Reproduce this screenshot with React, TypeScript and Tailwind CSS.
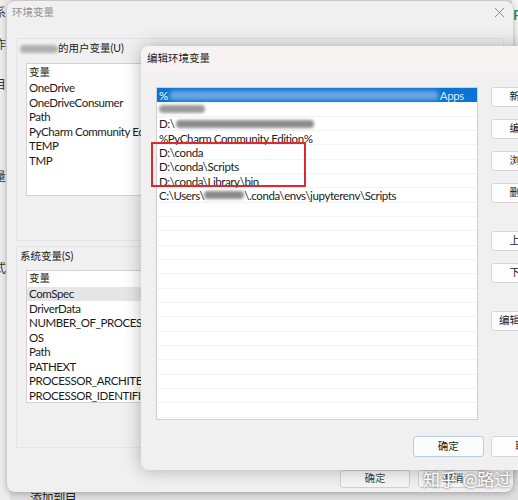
import React from "react";

const font = "font-['Lato','Noto_Sans_CJK_SC',sans-serif]";

function Blur({ w, c = "#777" }: { w: number; c?: string }) {
  return (
    <span
      className="inline-block h-[8px] align-middle blur-[1.5px] rounded-sm"
      style={{ width: w, background: c }}
    />
  );
}

function Btn({ label, className = "" }: { label: string; className?: string }) {
  return (
    <div
      className={`flex h-[20px] w-[58px] items-center justify-center rounded-[3px] border border-[#d6d6d6] bg-[#fdfdfd] text-[10.5px] tracking-normal text-[#1b1b1b] ${className}`}
    >
      {label}
    </div>
  );
}

export default function App() {
  const userVars = ["变量", "OneDrive", "OneDriveConsumer", "Path", "PyCharm Community Edition", "TEMP", "TMP"];
  const sysVars = [
    "变量",
    "ComSpec",
    "DriverData",
    "NUMBER_OF_PROCESSORS",
    "OS",
    "Path",
    "PATHEXT",
    "PROCESSOR_ARCHITECTURE",
    "PROCESSOR_IDENTIFIER",
  ];

  const editRows: React.ReactNode[] = [
    <span className="flex items-center gap-[2px] text-white">
      %<span className="inline-block h-[9px] w-[268px] blur-[2px] bg-[#6ea7e0]" />
      <span className="text-[#dbe9f7]">Apps</span>
    </span>,
    <span className="flex items-center">
      <Blur w={46} c="#9a9a9a" />
    </span>,
    <span className="flex items-center gap-[1px]">
      D:\<Blur w={138} c="#8c8c8c" />
    </span>,
    <span>%PyCharm Community Edition%</span>,
    <span>D:\conda</span>,
    <span>D:\conda\Scripts</span>,
    <span>D:\conda\Library\bin</span>,
    <span className="flex items-center">
      C:\Users\<Blur w={40} c="#8a8a8a" />\.conda\envs\jupyterenv\Scripts
    </span>,
  ];
  const totalEditRows = 23;

  return (
    <div className={`relative h-[500px] w-[518px] overflow-hidden bg-[#dedede] text-[11.5px] tracking-[-0.4px] ${font}`}>
      {/* back window strip on the left */}
      <div className="absolute left-0 top-0 flex h-full w-[10px] flex-col bg-[#ececec] text-[12px] text-[#333]">
        <div className="ml-[-6px] mt-[4px]">系</div>
        <div className="ml-[-6px] mt-[14px]">作</div>
        <div className="ml-[-6px] mt-[22px]">目</div>
        <div className="ml-[-6px] mt-[74px]">量</div>
        <div className="ml-[-6px] mt-[74px]">式</div>
      </div>

      {/* back window bottom */}
      <div className="absolute bottom-[-8px] left-[30px] text-[12px] text-[#222]">添加到目</div>

      {/* right strip */}
      <div className="absolute right-0 top-0 h-[60px] w-[6px] bg-[#f6f6f6]">
        <div className="ml-[1px] mt-[4px] text-[14px] font-bold text-[#1a9a6a]">F</div>
      </div>

      {/* outer dialog 环境变量 */}
      <div className="absolute left-[7px] top-[1px] flex h-[491px] w-[506px] flex-col rounded-[8px] bg-[#f0f0f0] shadow-[0_1px_6px_rgba(0,0,0,0.3)]">
        <div className="flex h-[24px] items-center justify-between pl-[5px] pr-[8px]">
          <span className="text-[10.5px] tracking-normal text-[#909090]">环境变量</span>
          <svg width="11" height="11" viewBox="0 0 11 11" className="mt-[-2px]">
            <path d="M1 1L10 10M10 1L1 10" stroke="#8a8a8a" strokeWidth="1" />
          </svg>
        </div>

        {/* user group */}
        <div className="ml-[9px] mt-[13px] flex h-[203px] w-[488px] flex-col border border-[#e4e4e4]">
          <div className="ml-[3px] mt-[2px] flex h-[16px] items-center text-[10.5px] tracking-normal text-[#1b1b1b]">
            <Blur w={38} c="#b0b0b0" />
            <span>的用户变量(U)</span>
          </div>
          <div className="ml-[9px] mt-[6px] flex h-[133px] w-[460px] flex-col border border-[#d2d2d2] bg-white pt-[2px] text-[#1b1b1b]">
            {userVars.map((v, i) => (
              <div
                key={v}
                className={`flex h-[14.5px] items-center whitespace-nowrap pl-[2px] ${
                  i === 0 ? "text-[10.5px] tracking-normal" : ""
                }`}
              >
                {v}
              </div>
            ))}
          </div>
        </div>

        {/* system group */}
        <div className="ml-[9px] mt-[5px] flex h-[202px] w-[488px] flex-col border border-[#e4e4e4]">
          <div className="ml-[3px] mt-[2px] flex h-[16px] items-center text-[10.5px] tracking-normal text-[#1b1b1b]">
            系统变量(S)
          </div>
          <div className="ml-[9px] mt-[5px] flex h-[133px] w-[460px] flex-col border border-[#d2d2d2] bg-white pt-[1px] text-[#1b1b1b]">
            {sysVars.map((v, i) => (
              <div
                key={v + i}
                className={`flex h-[14.5px] items-center whitespace-nowrap pl-[2px] ${i === 1 ? "bg-[#e6e6e6]" : ""} ${
                  i === 0 ? "text-[10.5px] tracking-normal" : ""
                }`}
              >
                {v}
              </div>
            ))}
          </div>
        </div>

        {/* bottom buttons */}
        <div className="ml-[333px] mt-[22px] flex gap-[8px] tracking-normal">
          <div className="flex h-[18px] w-[70px] items-center justify-center rounded-[3px] border border-[#d0d0d0] bg-[#f6f6f6] text-[10.5px] text-[#444]">
            确定
          </div>
          <div className="flex h-[18px] w-[70px] items-center justify-center rounded-[3px] border border-[#d0d0d0] bg-[#f6f6f6] text-[10.5px] text-[#444]">
            取消
          </div>
        </div>
      </div>

      {/* edit dialog 编辑环境变量 */}
      <div className="absolute left-[141px] top-[46px] flex h-[424px] w-[420px] flex-col overflow-hidden rounded-[8px] bg-[#f0f0f0] shadow-[0_0_18px_rgba(0,0,0,0.28)]">
        <div className="flex h-[25px] items-center bg-[#f8f3f3] pl-[6px] text-[10.5px] tracking-normal text-[#1b1b1b]">
          编辑环境变量
        </div>
        <div className="relative flex">
          <div className="ml-[15px] mt-[16px] flex h-[333px] w-[322px] flex-col overflow-hidden border border-[#cfcfcf] bg-white text-[#1b1b1b]">
            {Array.from({ length: totalEditRows }).map((_, i) => (
              <div
                key={i}
                className={`flex h-[14.33px] shrink-0 items-center whitespace-nowrap pl-[2px] pt-[1px] ${
                  i === 0 ? "bg-[#0a74d6]" : "border-b border-[#f2f2f2]"
                }`}
              >
                {editRows[i] ?? null}
              </div>
            ))}
          </div>

          <div className="ml-[13px] mt-[16px] flex flex-col">
            <Btn label="新建" />
            <Btn label="编辑" className="mt-[12px]" />
            <Btn label="浏览" className="mt-[12px]" />
            <Btn label="删除" className="mt-[12px]" />
            <Btn label="上移" className="mt-[28px]" />
            <Btn label="下移" className="mt-[12px]" />
            <Btn label="编辑文本" className="mt-[28px]" />
          </div>

          {/* red highlight box */}
          <div className="absolute left-[10px] top-[71px] h-[45px] w-[155px] border-2 border-[#dc2a2c]" />
        </div>

        <div className="ml-[272px] mt-[16px] flex gap-[7px] tracking-normal">
          <div className="flex h-[21px] w-[71px] items-center justify-center rounded-[3px] border border-[#b9cde0] bg-[#fcfcfc] text-[10.5px] text-[#1b1b1b]">
            确定
          </div>
          <div className="flex h-[21px] w-[71px] items-center justify-center rounded-[3px] border border-[#d6d6d6] bg-[#fdfdfd] text-[10.5px] text-[#1b1b1b]">
            取消
          </div>
        </div>
      </div>

      {/* watermark */}
      <div className="absolute left-[423px] top-[467px] flex gap-[6px] text-[17px] tracking-normal text-white [text-shadow:0_0_3px_rgba(0,0,0,0.7)]">
        <span>知乎</span>
        <span>@路过</span>
      </div>
    </div>
  );
}
